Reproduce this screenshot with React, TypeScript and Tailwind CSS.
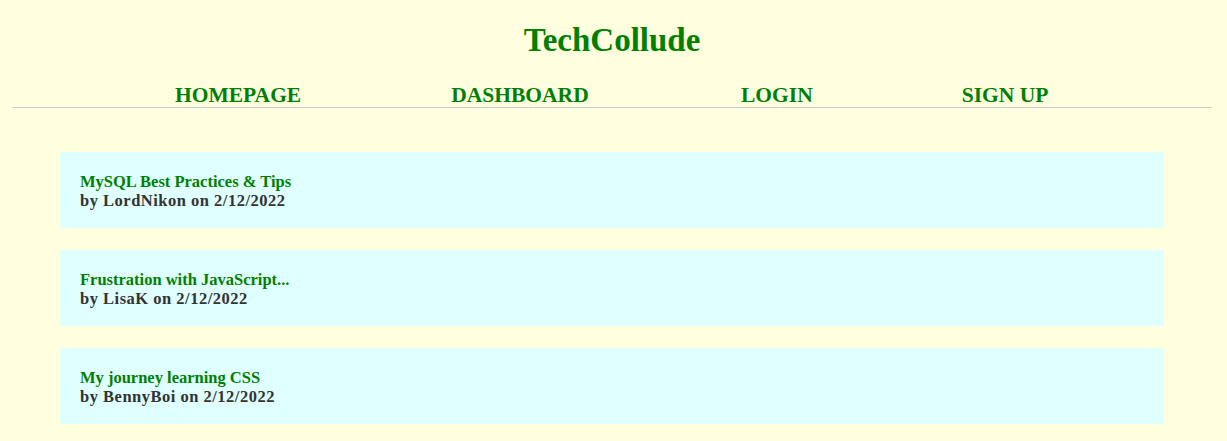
import React from "react";

const posts = [
  { title: "MySQL Best Practices & Tips", author: "LordNikon", date: "2/12/2022" },
  { title: "Frustration with JavaScript...", author: "LisaK", date: "2/12/2022" },
  { title: "My journey learning CSS", author: "BennyBoi", date: "2/12/2022" },
];

// widths taken from the layout so spacing between links stays even
const links = [
  { label: "HOMEPAGE", width: "w-[124px]" },
  { label: "DASHBOARD", width: "w-[140px]" },
  { label: "LOGIN", width: "w-[69px]" },
  { label: "SIGN UP", width: "w-[88px]" },
];

const PostCard = ({ title, author, date }: { title: string; author: string; date: string }) => {
  return (
    <div className="h-[76px] bg-[#e0ffff] px-[20px] pt-[20px]">
      <h2 className="text-[16.5px] leading-[19px] font-bold text-[#008000]">{title}</h2>
      <p className="text-[16.5px] leading-[19px] font-bold tracking-[0.5px] text-[#333333]">
        by {author} on {date}
      </p>
    </div>
  );
};

export default function App() {
  return (
    <div
      className="min-h-screen bg-[#ffffe0] pr-[15px] pl-[12px]"
      style={{ fontFamily: "'Liberation Serif', 'DejaVu Serif', serif" }}
    >
      <header>
        <h1 className="pt-[20px] text-center text-[33px] leading-[40px] font-bold text-[#008000]">
          TechCollude
        </h1>
        <nav className="mt-[23px] flex justify-center gap-[151px] border-b border-[#cccccc]">
          {links.map((link) => (
            <a
              key={link.label}
              href="#"
              className={`${link.width} text-center text-[21.5px] leading-[24px] font-bold whitespace-nowrap text-[#008000]`}
            >
              {link.label}
            </a>
          ))}
        </nav>
      </header>
      <main className="flex flex-col gap-[22px] px-[48px] pt-[44px]">
        {posts.map((post, idx) => (
          <PostCard key={`${post.title} ${idx}`} {...post} />
        ))}
      </main>
    </div>
  );
}
